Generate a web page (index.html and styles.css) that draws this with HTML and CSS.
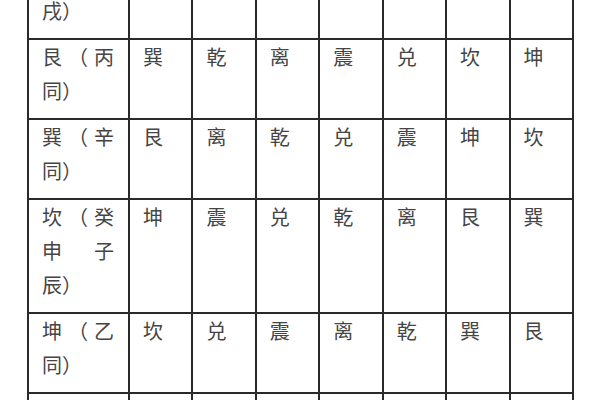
FILE: index.html
```html
<!DOCTYPE html>
<html lang="zh-CN">
<head>
<meta charset="utf-8">
<title>纳甲表</title>
<link rel="stylesheet" href="styles.css">
</head>
<body>
<div class="page">
  <table class="grid">
    <colgroup>
      <col class="c-head">
      <col><col><col><col><col><col><col>
    </colgroup>
    <tbody>
      <tr><td class="head">离（壬寅午戌）</td><td>震</td><td>坤</td><td>艮</td><td>巽</td><td>坎</td><td>乾</td><td>兑</td></tr>
      <tr><td class="head">艮（丙同）</td><td>巽</td><td>乾</td><td>离</td><td>震</td><td>兑</td><td>坎</td><td>坤</td></tr>
      <tr><td class="head">巽（辛同）</td><td>艮</td><td>离</td><td>乾</td><td>兑</td><td>震</td><td>坤</td><td>坎</td></tr>
      <tr><td class="head">坎（癸申子辰）</td><td>坤</td><td>震</td><td>兑</td><td>乾</td><td>离</td><td>艮</td><td>巽</td></tr>
      <tr><td class="head">坤（乙同）</td><td>坎</td><td>兑</td><td>震</td><td>离</td><td>乾</td><td>巽</td><td>艮</td></tr>
      <tr><td class="head">震（庚亥卯未）</td><td>离</td><td>坎</td><td>坤</td><td>艮</td><td>巽</td><td>兑</td><td>乾</td></tr>
    </tbody>
  </table>
</div>
</body>
</html>
```

FILE: styles.css
```css
html, body {
  margin: 0;
  padding: 0;
  background: #ffffff;
  overflow: hidden;
}

.page {
  width: 600px;
  height: 400px;
  overflow: hidden;
  padding-left: 27px;
  box-sizing: border-box;
}

.grid {
  margin-top: -76px;
  width: 547px;
  table-layout: fixed;
  border-collapse: collapse;
  font-family: "Noto Sans CJK SC", "Noto Sans CJK JP", sans-serif;
  font-size: 20px;
  line-height: 34px;
  color: #454545;
  text-spacing-trim: space-all;
}

.c-head {
  width: 101px;
}

.grid td {
  border: 2px solid #2a2a2a;
  padding: 0 13px 10px 13px;
  vertical-align: top;
  text-align: left;
}

.grid td.head {
  text-align: justify;
  padding-right: 14px;
}
```
